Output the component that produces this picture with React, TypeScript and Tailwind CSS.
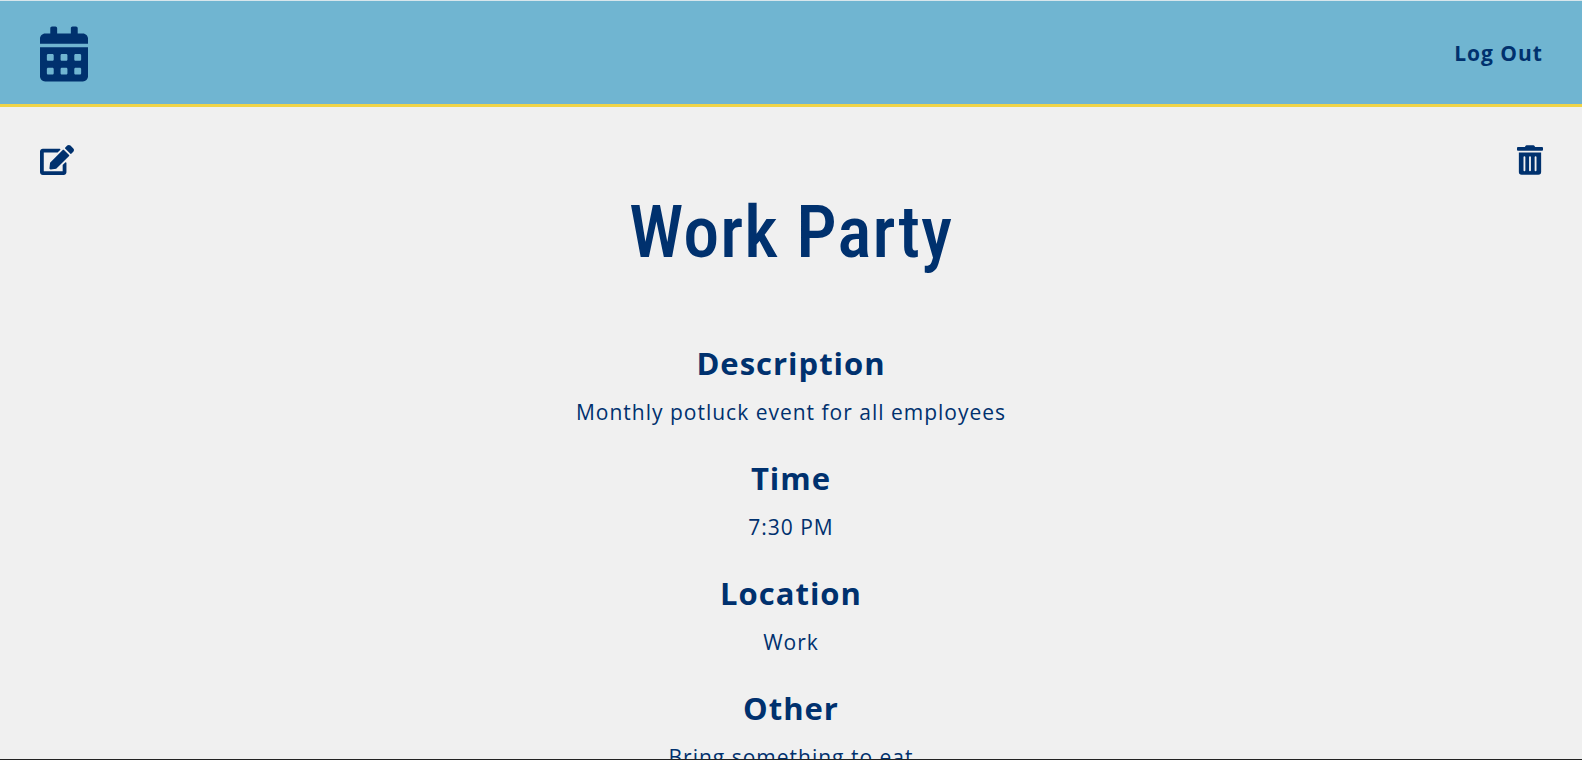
import { FaCalendarAlt, FaEdit, FaTrashAlt } from "react-icons/fa";

const details = [
  { title: "Description", text: "Monthly potluck event for all employees" },
  { title: "Time", text: "7:30 PM" },
  { title: "Location", text: "Work" },
  { title: "Other", text: "Bring something to eat" },
];

export default function App() {
  return (
    <div className="flex h-screen flex-col bg-[#f0f0f0] font-['Open_Sans','Noto_Sans',sans-serif] tracking-[1px] text-[#00316e]">
      <header className="flex items-center justify-between border-t border-b-3 border-t-[#d8e6ec] border-b-[#f0d448] bg-[#70b5d1] pt-[25px] pr-[39px] pb-[22px] pl-10">
        <a href="#home" aria-label="Calendar">
          <FaCalendarAlt className="h-14 w-12" />
        </a>
        <a href="#logout" className="text-[21px] font-bold">Log Out</a>
      </header>
      <main className="min-h-0 flex-1 overflow-hidden">
        <div className="flex items-center justify-between pt-9 pr-[39px] pl-10">
          <button type="button" aria-label="Edit event">
            <FaEdit className="size-[34px]" />
          </button>
          <button type="button" aria-label="Delete event">
            <FaTrashAlt className="h-[30px] w-[26px]" />
          </button>
        </div>
        <h1 className="mt-2 text-center font-['Roboto_Condensed','Roboto',sans-serif] text-[72px] leading-[96px] font-medium">Work Party</h1>
        <div className="mt-[55px] text-center">
          {details.map((d) => (
            <section key={d.title} className="mb-4">
              <h2 className="text-[31px] leading-[54px] font-bold">{d.title}</h2>
              <p className="text-[21px] leading-[45px]">{d.text}</p>
            </section>
          ))}
        </div>
      </main>
      <footer className="h-px bg-[#222]" />
    </div>
  );
}
